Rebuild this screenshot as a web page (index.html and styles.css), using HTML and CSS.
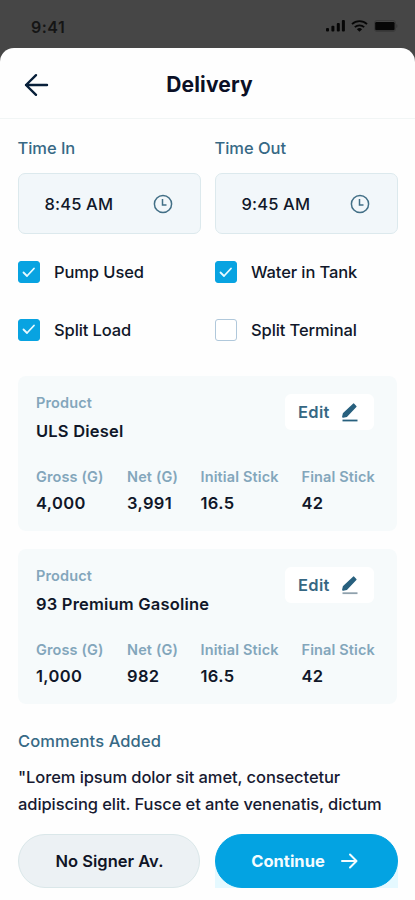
FILE: index.html
```html
<!DOCTYPE html>
<html lang="en">
<head>
<meta charset="utf-8">
<meta name="viewport" content="width=device-width, initial-scale=1">
<title>Delivery</title>
<link rel="stylesheet" href="styles.css">
</head>
<body>
<div class="status-bar">
  <span class="clock">9:41</span>
  <div class="status-icons">
    <svg width="20" height="13" viewBox="0 0 20 13"><rect x="0" y="9" width="3" height="3.5" rx="1"/><rect x="5.4" y="6.7" width="3" height="5.8" rx="1"/><rect x="10.8" y="4" width="3" height="8.500" rx="1"/><rect x="15.900" y="1" width="3" height="11.500" rx="1"/></svg>
    <svg class="wifi" width="17" height="12" viewBox="0 0 17 12"><g fill="none" stroke="#060606" stroke-width="1.800"><path d="M1 4.200a10.800 10.800 0 0 1 15 0"/><path d="M3.800 7.200a6.800 6.800 0 0 1 9.400 0"/></g><path d="M5.900 9.200a4 4 0 0 1 5.200 0L8.500 11.800z"/></svg>
    <svg width="24" height="12" viewBox="0 0 24 12"><rect x=".5" y=".5" width="21" height="11" rx="2.5" fill="none" stroke="#3a3a3a"/><rect x="1.200" y="1.900" width="19.400" height="8.400" rx="1.300"/><path d="M22.400 4v4c1.300-.5 1.300-3.500 0-4z" fill="#343434"/></svg>
  </div>
</div>
<main class="sheet">
  <header class="header">
    <svg class="back" width="26" height="24" viewBox="0 0 26 24"><path d="M23 12H2M12 2.200 2 12l10 9.800"/></svg>
    <h1>Delivery</h1>
  </header>
  <section class="times">
    <div class="field">
      <span class="label">Time In</span>
      <div class="time-box"><span>8:45 AM</span><svg width="20" height="20" viewBox="0 0 20 20"><circle cx="10" cy="10" r="8.600"/><path d="M9.500 5v6h4"/></svg></div>
    </div>
    <div class="field">
      <span class="label">Time Out</span>
      <div class="time-box"><span>9:45 AM</span><svg width="20" height="20" viewBox="0 0 20 20"><circle cx="10" cy="10" r="8.600"/><path d="M9.500 5v6h4"/></svg></div>
    </div>
  </section>
  <section class="checks">
    <div class="check"><span class="box on"><svg width="14" height="11" viewBox="0 0 14 11"><path d="M1.500 5.500 5 9l7-7.500"/></svg></span><span>Pump Used</span></div>
    <div class="check"><span class="box on"><svg width="14" height="11" viewBox="0 0 14 11"><path d="M1.500 5.500 5 9l7-7.500"/></svg></span><span>Water in Tank</span></div>
    <div class="check"><span class="box on"><svg width="14" height="11" viewBox="0 0 14 11"><path d="M1.500 5.500 5 9l7-7.500"/></svg></span><span>Split Load</span></div>
    <div class="check"><span class="box"></span><span>Split Terminal</span></div>
  </section>
  <article class="card">
    <div class="card-top">
      <div class="product"><span class="key">Product</span><span class="name">ULS Diesel</span></div>
      <div class="edit"><span>Edit</span><svg width="17" height="19" viewBox="0 0 17 19"><path class="pen" d="M12.600 1.300 14.700 3.500 5.700 13 2 13.800 2.700 10.700z"/><path class="base" d="M1.500 17.500h15"/></svg></div>
    </div>
    <div class="stats">
      <div><span class="key">Gross (G)</span><span class="value">4,000</span></div>
      <div><span class="key">Net (G)</span><span class="value">3,991</span></div>
      <div><span class="key">Initial Stick</span><span class="value">16.5</span></div>
      <div><span class="key">Final Stick</span><span class="value">42</span></div>
    </div>
  </article>
  <article class="card">
    <div class="card-top">
      <div class="product"><span class="key">Product</span><span class="name">93 Premium Gasoline</span></div>
      <div class="edit"><span>Edit</span><svg width="17" height="19" viewBox="0 0 17 19"><path class="pen" d="M12.600 1.300 14.700 3.500 5.700 13 2 13.800 2.700 10.700z"/><path class="base soft" d="M1.500 17.200h15"/></svg></div>
    </div>
    <div class="stats">
      <div><span class="key">Gross (G)</span><span class="value">1,000</span></div>
      <div><span class="key">Net (G)</span><span class="value">982</span></div>
      <div><span class="key">Initial Stick</span><span class="value">16.5</span></div>
      <div><span class="key">Final Stick</span><span class="value">42</span></div>
    </div>
  </article>
  <section class="comments">
    <h2 class="label">Comments Added</h2>
    <p>"Lorem ipsum dolor sit amet, consectetur<br>adipiscing elit. Fusce et ante venenatis, dictum</p>
  </section>
  <footer class="actions">
    <div><button class="btn secondary">No Signer Av.</button></div>
    <div class="tinted"><button class="btn primary"><span>Continue</span><svg width="17" height="16" viewBox="0 0 17 16"><path d="M1 8h14M9 1.500 15.500 8 9 14.500"/></svg></button></div>
  </footer>
</main>
</body>
</html>
```
FILE: styles.css
```css
* { box-sizing: border-box; }
body {
  margin: 0;
  height: 900px;
  overflow: hidden;
  background: #464646;
  color: #101729;
  font-family: Inter, "Liberation Sans", sans-serif;
  font-size: 16.5px;
  font-weight: 500;
}
svg { display: block; flex: none; }
.status-bar {
  height: 48px;
  padding: 5px 17px 0 31px;
  display: flex;
  align-items: center;
  justify-content: space-between;
  color: #151515;
}
.clock { font-size: 16px; font-weight: 600; line-height: 20px; letter-spacing: .5px; }
.status-icons { display: flex; align-items: center; gap: 5px; margin-top: -2px; fill: #060606; }
.status-icons .wifi { margin-right: 1px; }
.sheet {
  height: 852px;
  background: #fefefe;
  border-radius: 14px 14px 0 0;
  overflow: hidden;
}
.header {
  height: 71px;
  padding: 3px 20px 0 24px;
  display: grid;
  grid-template-columns: 26px 1fr 26px;
  align-items: center;
  border-bottom: 1px solid #f1f5f5;
}
.header svg { fill: none; stroke: #08203a; stroke-width: 2.4; stroke-linecap: round; stroke-linejoin: round; }
h1 { margin: 1px 0 0; font-size: 21px; font-weight: 700; line-height: 28px; letter-spacing: .15px; text-align: center; color: #0b1026; }
.times { display: grid; grid-template-columns: 183px 183px; gap: 14px; padding: 18px 17.5px 0; }
.field { display: flex; flex-direction: column; gap: 14px; }
.label { font-size: 16.5px; font-weight: 500; line-height: 22px; color: #376985; }
.field .label { letter-spacing: -.05px; }
.comments .label { letter-spacing: .1px; }
.time-box {
  height: 61px;
  padding: 0 27px 0 26px;
  display: flex;
  align-items: center;
  justify-content: space-between;
  border: 1.5px solid #dce9ed;
  border-radius: 7px;
  background: #f2f7fa;
  letter-spacing: .15px;
}
.time-box svg { fill: none; stroke: #426f86; stroke-width: 1.5; }
.checks {
  display: grid;
  grid-template-columns: 183px 183px;
  column-gap: 14px;
  row-gap: 35.5px;
  padding: 27px 18px 0;
}
.check { display: flex; align-items: center; gap: 14px; height: 22px; white-space: nowrap; letter-spacing: -.1px; }
.box { width: 22px; height: 22px; flex: none; display: grid; place-items: center; border: 1.5px solid #b0c8db; border-radius: 3px; background: #fff; }
.box.on { background: #08a3e1; border-color: #08a3e1; }
.box svg { fill: none; stroke: #e9faff; stroke-width: 1.8; stroke-linecap: round; stroke-linejoin: round; }
.card { margin: 0 18px; height: 155px; padding: 18px 23px 0 18px; border-radius: 8px; background: #f6fafb; }
.checks + .card { margin-top: 35.5px; }
.card + .card { margin-top: 18px; }
.card-top { display: flex; justify-content: space-between; height: 48px; }
.product { display: flex; flex-direction: column; gap: 8px; }
.key { font-size: 14.5px; font-weight: 600; line-height: 18px; letter-spacing: .13px; color: #83a6bb; }
.name, .value { font-size: 16.5px; font-weight: 600; line-height: 22px; }
.name { letter-spacing: .2px; }
.value { letter-spacing: .35px; }
.edit {
  width: 89px;
  height: 36px;
  padding: 0 16px 0 13px;
  display: flex;
  align-items: center;
  justify-content: space-between;
  border-radius: 6px;
  background: #fff;
  font-size: 16.5px;
  font-weight: 600;
  letter-spacing: .3px;
  color: #366783;
}
.pen { fill: #28607e; stroke: #28607e; stroke-width: 1.8; stroke-linejoin: round; }
.base { stroke: #28607e; stroke-width: 1.8; }
.base.soft { stroke: #8fa1ad; }
.stats { display: grid; grid-template-columns: 91px 73.5px 101px 1fr; margin-top: 26px; white-space: nowrap; }
.stats > div { display: flex; flex-direction: column; gap: 6px; }
.comments { padding: 25.5px 18px 0; }
.comments h2 { margin: 0; }
.comments p { margin: 12.5px 0 0; line-height: 27px; letter-spacing: -.09px; white-space: nowrap; color: #171a31; }
.actions { display: grid; grid-template-columns: 182px 183px; gap: 15px; padding: 16px 18px 0; }
.btn {
  width: 100%;
  height: 54px;
  padding: 0;
  display: flex;
  align-items: center;
  justify-content: center;
  gap: 16px;
  border: 1px solid #dae7e9;
  border-radius: 27px;
  font: 600 16.5px Inter, "Liberation Sans", sans-serif;
}
.secondary { padding-left: 1px; background: #ecf1f4; color: #101426; }
.primary { padding-right: 4px; background: #03a3e2; border-color: #03a3e2; color: #f4fcff; font-weight: 700; }
.primary svg { fill: none; stroke: #f4fcff; stroke-width: 2; stroke-linecap: round; stroke-linejoin: round; }
.tinted { background: linear-gradient(#fefefe 60%, #e5f9ff 60%); }
```
